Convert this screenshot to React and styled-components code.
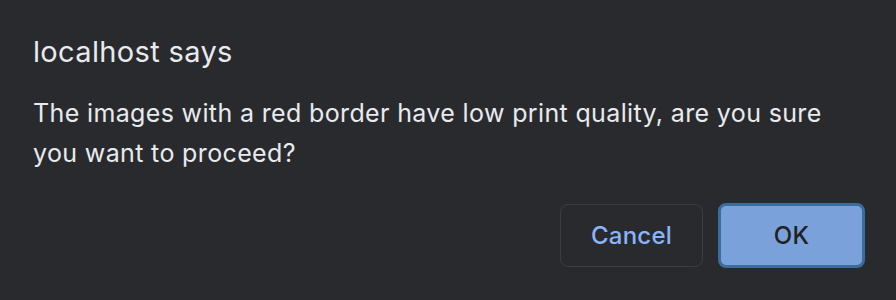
import styled, { createGlobalStyle } from 'styled-components'

const Global = createGlobalStyle`
  html, body {
    margin: 0;
    padding: 0;
    background: #292a2d;
  }
  * { box-sizing: border-box; }
`

const Dialog = styled.div`
  width: 896px;
  height: 300px;
  background: #292a2d;
  color: #e8eaed;
  font-family: Inter, "Noto Sans", sans-serif;
  padding: 34px 31px 32px 33px;
  display: flex;
  flex-direction: column;
`

const Title = styled.div`
  font-size: 29px;
  line-height: 36px;
  font-weight: 400;
  letter-spacing: 0.35px;
`

const Message = styled.div`
  margin-top: 23px;
  font-size: 25px;
  line-height: 40px;
  letter-spacing: 0.36px;
  max-width: 810px;
`

const Actions = styled.div`
  margin-top: auto;
  display: flex;
  justify-content: flex-end;
  align-items: center;
  gap: 15px;
`

const Button = styled.button`
  font-family: Inter, "Noto Sans", sans-serif;
  font-size: 24px;
  font-weight: 500;
  letter-spacing: 0.2px;
  border-radius: 8px;
  cursor: pointer;
  padding: 0;
  height: ${p => (p.$primary ? '65px' : '63px')};
  width: ${p => (p.$primary ? '147px' : '143px')};
  background: ${p => (p.$primary ? '#7ba1da' : 'transparent')};
  color: ${p => (p.$primary ? '#202124' : '#8ab4f8')};
  border: ${p => (p.$primary ? '3px solid #3b6d9c' : '1px solid #3c3d41')};
`

const App = () => {
  return (
    <>
      <Global />
      <Dialog>
        <Title>localhost says</Title>
        <Message>
          The images with a red border have low print quality, are you sure you want to proceed?
        </Message>
        <Actions>
          <Button>Cancel</Button>
          <Button $primary>OK</Button>
        </Actions>
      </Dialog>
    </>
  )
}

export default App
